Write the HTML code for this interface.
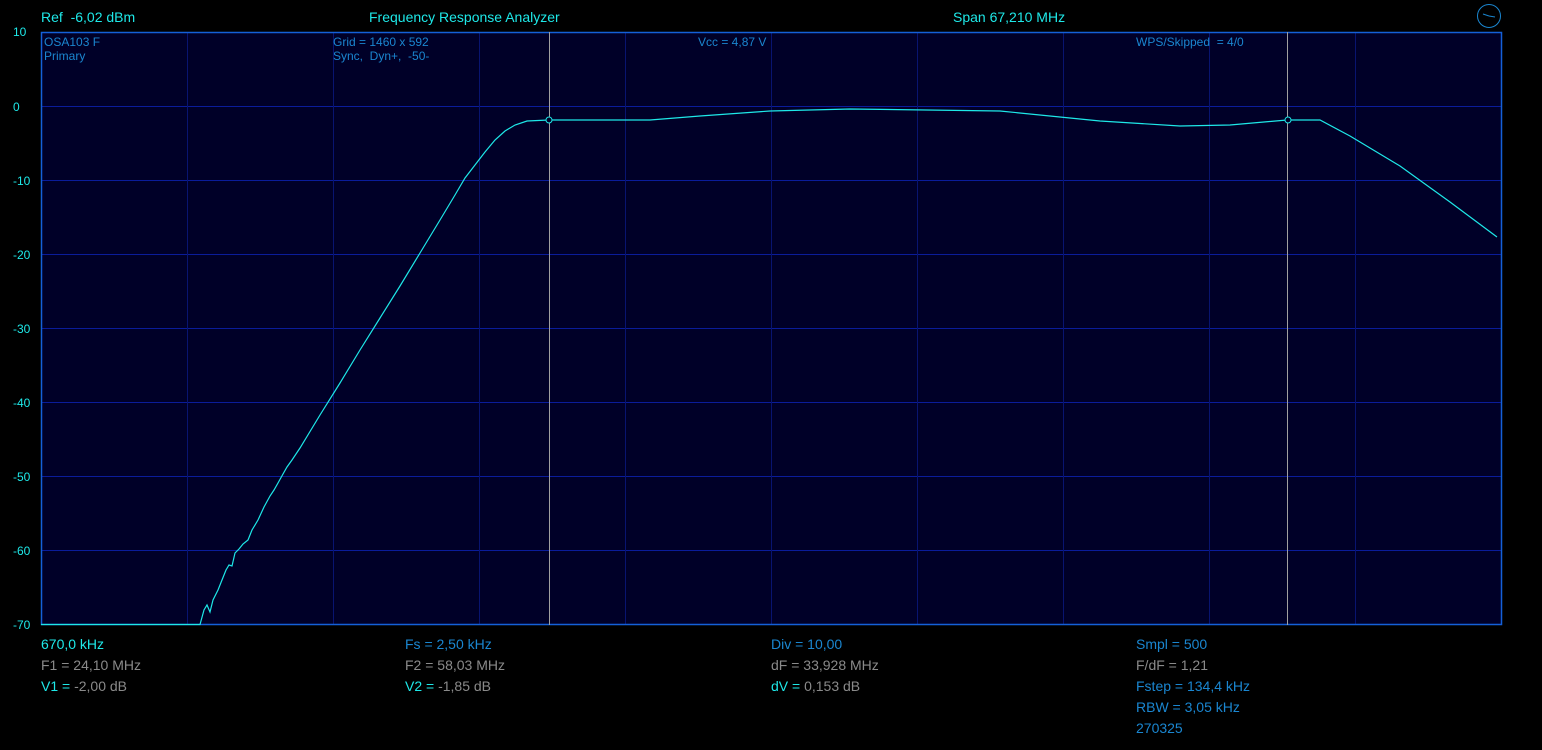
<!DOCTYPE html>
<html><head><meta charset="utf-8"><style>
body{margin:0;width:1542px;height:750px;background:#000;overflow:hidden;position:relative;font-family:"Liberation Sans",sans-serif;}
.t{position:absolute;white-space:nowrap;font-size:14px;line-height:16px;}
.c{color:#1ee8e8}.b{color:#1a86d0}.g{color:#8a8a8a}
.s{font-size:12px;line-height:14px;}
</style></head><body>
<svg width="1542" height="750" style="position:absolute;left:0;top:0">
<rect x="41" y="32" width="1461" height="593" fill="#000028"/>
<g stroke="#0a1c9a" stroke-width="1">
<line x1="41" y1="106.5" x2="1502" y2="106.5"/><line x1="41" y1="180.5" x2="1502" y2="180.5"/>
<line x1="41" y1="254.5" x2="1502" y2="254.5"/><line x1="41" y1="328.5" x2="1502" y2="328.5"/>
<line x1="41" y1="402.5" x2="1502" y2="402.5"/><line x1="41" y1="476.5" x2="1502" y2="476.5"/>
<line x1="41" y1="550.5" x2="1502" y2="550.5"/>
</g>
<g stroke="#081470" stroke-width="1">
<line x1="187.5" y1="32" x2="187.5" y2="625"/><line x1="333.5" y1="32" x2="333.5" y2="625"/>
<line x1="479.5" y1="32" x2="479.5" y2="625"/><line x1="625.5" y1="32" x2="625.5" y2="625"/>
<line x1="771.5" y1="32" x2="771.5" y2="625"/><line x1="917.5" y1="32" x2="917.5" y2="625"/>
<line x1="1063.5" y1="32" x2="1063.5" y2="625"/><line x1="1209.5" y1="32" x2="1209.5" y2="625"/>
<line x1="1355.5" y1="32" x2="1355.5" y2="625"/>
</g>
<rect x="41.5" y="32.5" width="1460" height="592" fill="none" stroke="#1460d8" stroke-width="1.5"/>
<line x1="549.5" y1="32" x2="549.5" y2="625" stroke="#a0a0a0"/>
<line x1="1287.5" y1="32" x2="1287.5" y2="625" stroke="#a0a0a0"/>
<polyline fill="none" stroke="#1ee8e8" stroke-width="1.2" points="41,624.5 200,624.5 204,610 207,605 210,612 213,600 218,590 222,580 226,570 229,565 232,566 235,553 239,549 243,544 248,540 252,530 258,520 264,507 270,496 274,490 278,483 283,474 287,467 292,460 300,448 320,415 340,383 360,350 380,318 400,286 420,253 440,220 455,195 465,178 475,165 485,152 495,140 505,131 515,125 527,121 549,120 650,120 700,116 770,111 850,109 1000,111 1100,121 1180,126 1230,125 1287,120 1320,120 1350,136 1400,166 1450,202 1497,237"/>
<circle cx="549" cy="120" r="3" fill="#000028" stroke="#1ee8e8"/>
<circle cx="1288" cy="120" r="3" fill="#000028" stroke="#1ee8e8"/>
<circle cx="1489" cy="16" r="11.5" fill="none" stroke="#1a86d0"/>
<line x1="1489" y1="16" x2="1483" y2="14" stroke="#1a86d0"/><line x1="1489" y1="16" x2="1495" y2="17" stroke="#1a86d0"/>
</svg>
<div class="t c" style="left:41px;top:9px">Ref&nbsp; -6,02 dBm</div>
<div class="t c" style="left:369px;top:9px">Frequency Response Analyzer</div>
<div class="t c" style="left:953px;top:9px">Span 67,210 MHz</div>
<div class="t c s" style="left:13px;top:25px">10</div>
<div class="t c s" style="left:13px;top:100px">0</div>
<div class="t c s" style="left:13px;top:174px">-10</div>
<div class="t c s" style="left:13px;top:248px">-20</div>
<div class="t c s" style="left:13px;top:322px">-30</div>
<div class="t c s" style="left:13px;top:396px">-40</div>
<div class="t c s" style="left:13px;top:470px">-50</div>
<div class="t c s" style="left:13px;top:544px">-60</div>
<div class="t c s" style="left:13px;top:618px">-70</div>
<div class="t b s" style="left:44px;top:35px">OSA103 F<br>Primary</div>
<div class="t b s" style="left:333px;top:35px">Grid = 1460 x 592<br>Sync,&nbsp; Dyn+,&nbsp; -50-</div>
<div class="t b s" style="left:698px;top:35px">Vcc = 4,87 V</div>
<div class="t b s" style="left:1136px;top:35px">WPS/Skipped&nbsp; = 4/0</div>
<div class="t" style="left:41px;top:634px;line-height:21px"><span class="c">670,0 kHz</span><br><span class="g">F1 = 24,10 MHz</span><br><span class="c">V1 =</span> <span class="g">-2,00 dB</span></div>
<div class="t" style="left:405px;top:634px;line-height:21px"><span class="b">Fs = 2,50 kHz</span><br><span class="g">F2 = 58,03 MHz</span><br><span class="c">V2 =</span> <span class="g">-1,85 dB</span></div>
<div class="t" style="left:771px;top:634px;line-height:21px"><span class="b">Div = 10,00</span><br><span class="g">dF = 33,928 MHz</span><br><span class="c">dV =</span> <span class="g">0,153 dB</span></div>
<div class="t b" style="left:1136px;top:634px;line-height:21px">Smpl = 500<br><span class="g">F/dF = 1,21</span><br>Fstep = 134,4 kHz<br>RBW = 3,05 kHz<br>270325</div>
</body></html>
